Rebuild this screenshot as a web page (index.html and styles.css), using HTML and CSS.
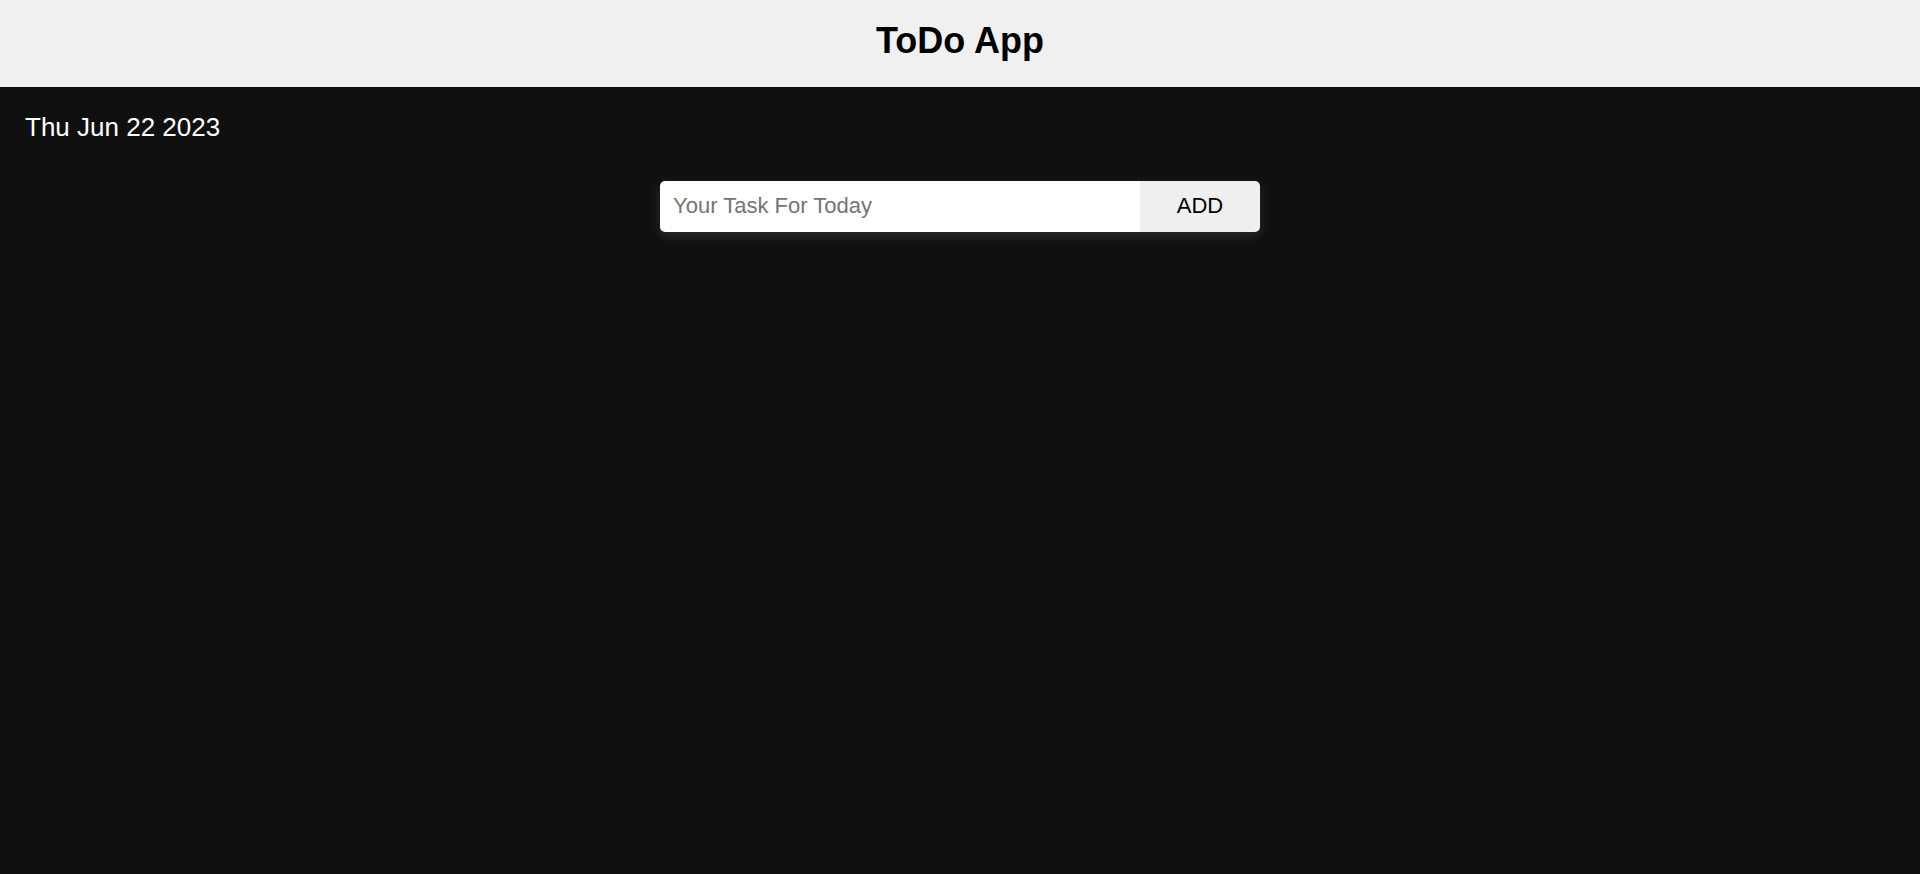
FILE: index.html
```html
<!DOCTYPE html>
<html lang="en">
<head>
    <meta charset="UTF-8">
    <meta name="viewport" content="width=device-width, initial-scale=1.0">
    <title>ToDo App</title>
    <link rel="stylesheet" href="styles.css">
</head>
<body>

<header class="app-header">
    <h1>ToDo App</h1>
</header>

<main class="app-main">
    <!-- Today's date -->
    <p class="today">Thu Jun 22 2023</p>

    <!-- Task form -->
    <form class="task-form" id="taskForm">
        <input type="text" id="task" placeholder="Your Task For Today">
        <button type="submit">ADD</button>
    </form>

    <!-- Tasks will appear here -->
    <ul class="task-list" id="taskList"></ul>
</main>

</body>
</html>
```

FILE: styles.css
```css
* {
    box-sizing: border-box;
}
html, body {
    height: 100%;
}
body {
    font-family: "Liberation Sans", Arial, sans-serif;
    background-color: #101010;
    margin: 0;
}
.app-header {
    background-color: #f0f0f0;
    height: 87px;
    display: flex;
    justify-content: center;
    align-items: center;
}
.app-header h1 {
    margin: 0;
    font-size: 36px;
    color: #000;
    padding-bottom: 5px;
}
.app-main {
    padding: 25px 25px;
}
.today {
    margin: 0;
    color: #fff;
    font-size: 26px;
}
.task-form {
    display: flex;
    width: 600px;
    height: 51px;
    margin: 38px auto 0;
    border-radius: 5px;
    overflow: hidden;
    box-shadow: 0 4px 12px rgba(255, 255, 255, 0.12);
}
.task-form input {
    flex: 1;
    border: none;
    outline: none;
    padding: 0 13px 2px;
    font-family: inherit;
    font-size: 22px;
    background-color: #fff;
}
.task-form input::placeholder {
    color: #757575;
}
.task-form button {
    width: 120px;
    border: none;
    background-color: #efefef;
    color: #000;
    font-family: inherit;
    font-size: 22px;
    padding-bottom: 2px;
    cursor: pointer;
}
.task-list {
    list-style: none;
    padding: 0;
}
```
